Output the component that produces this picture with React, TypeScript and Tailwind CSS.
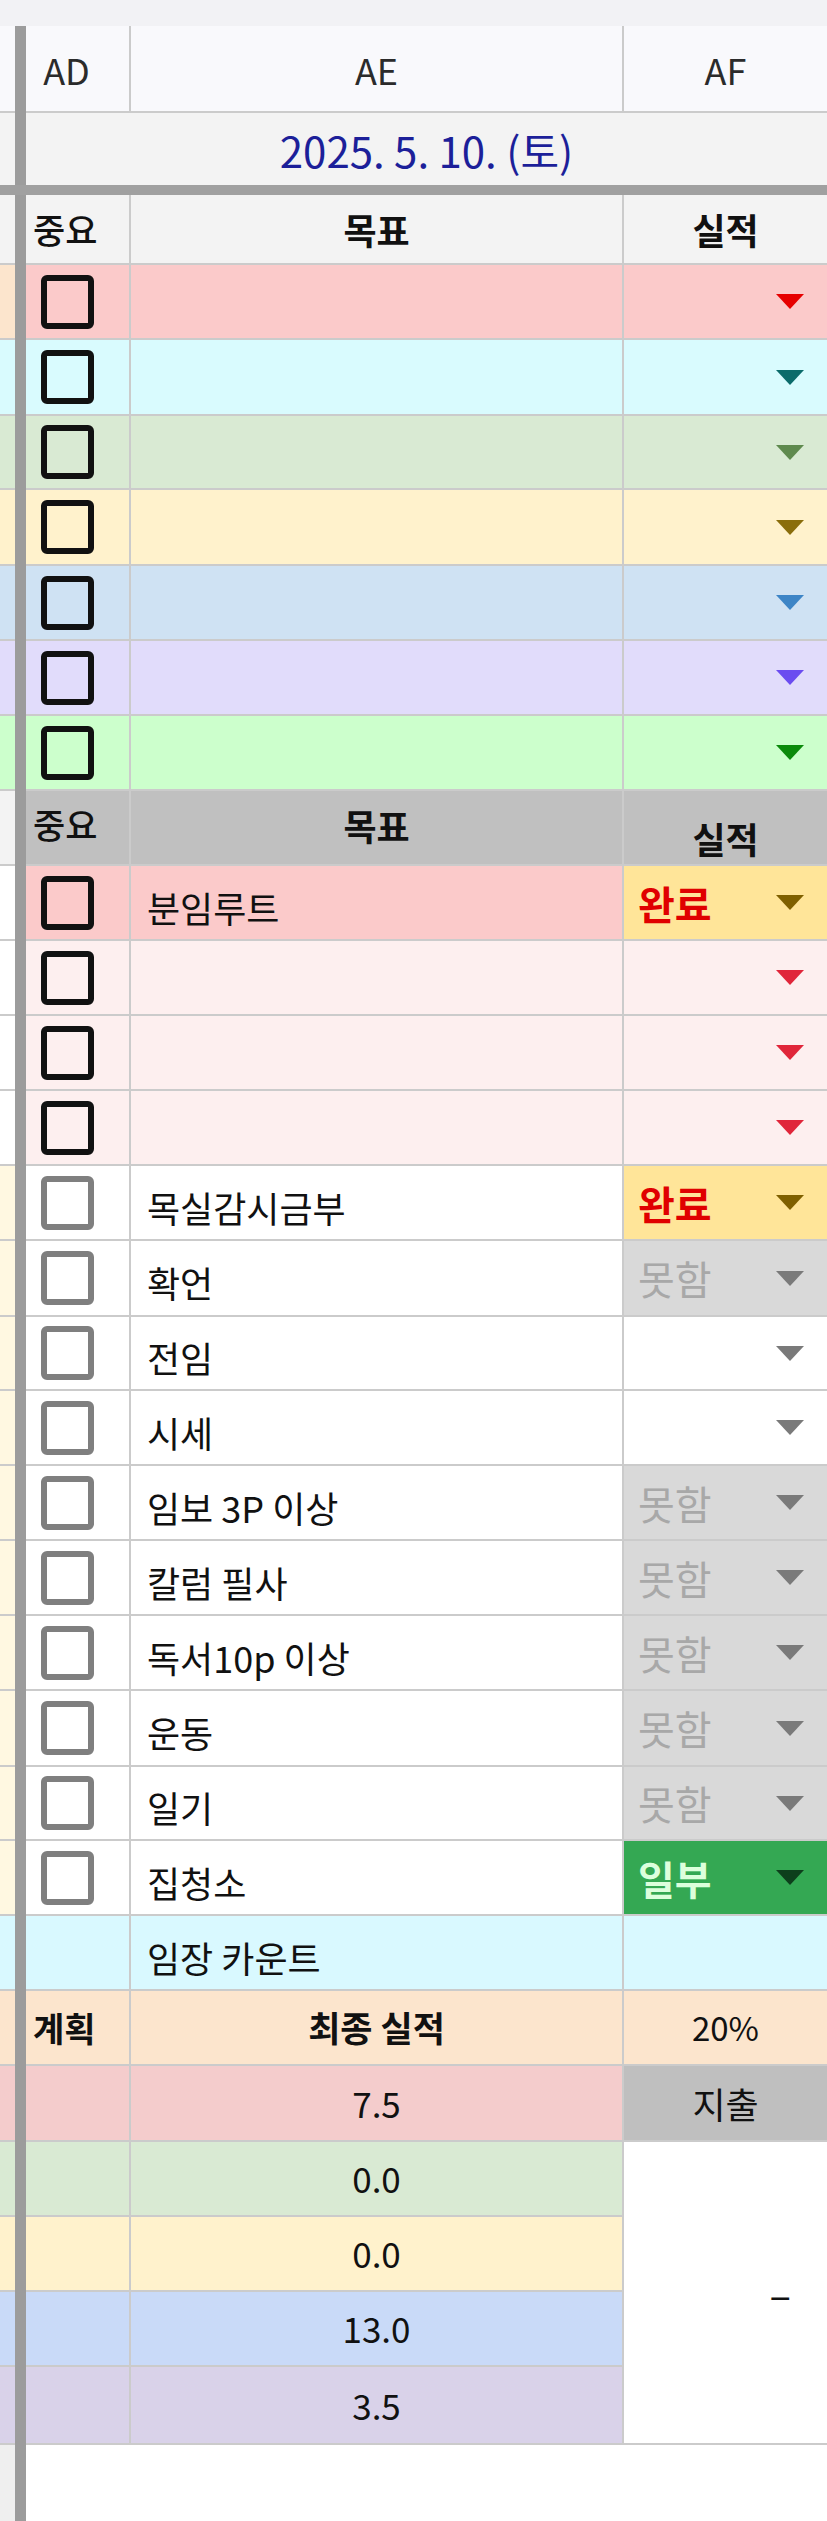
import React from 'react';

const B = 'border-b-2 border-[#cbcbcb]';

type Tone = { h: string; bg: string; strip: string; tri: string };

const colorRows: Tone[] = [
  { h: 'h-[75px]', bg: 'bg-[#fbcaca]', strip: 'bg-[#fce5cd]', tri: '#e60000' },
  { h: 'h-[76px]', bg: 'bg-[#d9fbfe]', strip: 'bg-[#d9fbfe]', tri: '#0b6b6b' },
  { h: 'h-[74px]', bg: 'bg-[#d9ead3]', strip: 'bg-[#d9ead3]', tri: '#5f8a4e' },
  { h: 'h-[76px]', bg: 'bg-[#fff2cc]', strip: 'bg-[#fff2cc]', tri: '#8a6d0b' },
  { h: 'h-[75px]', bg: 'bg-[#cfe2f3]', strip: 'bg-[#cfe2f3]', tri: '#3d85c6' },
  { h: 'h-[75px]', bg: 'bg-[#e1dcfb]', strip: 'bg-[#e1dcfb]', tri: '#6b4cf0' },
  { h: 'h-[75px]', bg: 'bg-[#ccffcc]', strip: 'bg-[#ccffcc]', tri: '#0b8a0b' },
];

type Goal = {
  h: string;
  text: string;
  status?: 'done' | 'miss' | 'part' | 'none';
};

const goals: Goal[] = [
  { h: 'h-[75px]', text: '목실감시금부', status: 'done' },
  { h: 'h-[76px]', text: '확언', status: 'miss' },
  { h: 'h-[74px]', text: '전임', status: 'none' },
  { h: 'h-[75px]', text: '시세', status: 'none' },
  { h: 'h-[75px]', text: '임보 3P 이상', status: 'miss' },
  { h: 'h-[75px]', text: '칼럼 필사', status: 'miss' },
  { h: 'h-[75px]', text: '독서10p 이상', status: 'miss' },
  { h: 'h-[76px]', text: '운동', status: 'miss' },
  { h: 'h-[74px]', text: '일기', status: 'miss' },
  { h: 'h-[75px]', text: '집청소', status: 'part' },
];

const totals = [
  { h: 'h-[75px]', bg: 'bg-[#d9ead3]', value: '0.0' },
  { h: 'h-[75px]', bg: 'bg-[#fff2cc]', value: '0.0' },
  { h: 'h-[75px]', bg: 'bg-[#c9daf8]', value: '13.0' },
  { h: 'h-[78px]', bg: 'bg-[#d9d2e9]', value: '3.5' },
];

function Row({ h, strip, children, border = true }: { h: string; strip: string; children: React.ReactNode; border?: boolean }) {
  return (
    <div className={`flex shrink-0 ${h}`}>
      <div className={`w-[15px] shrink-0 ${strip} ${border ? B : ''}`} />
      <div className="w-[11px] shrink-0 bg-[#9c9c9c]" />
      {children}
    </div>
  );
}

function Box({ dim }: { dim?: boolean }) {
  return (
    <div
      className={`w-[53px] h-[54px] rounded-[6px] border-[6px] ${dim ? 'border-[#7f7f7f]' : 'border-[#111111]'}`}
    />
  );
}

function Tri({ color }: { color: string }) {
  return (
    <svg width="28" height="15" viewBox="0 0 28 15" className="ml-auto mr-[23px] shrink-0">
      <polygon points="0,0 28,0 14,15" fill={color} />
    </svg>
  );
}

function AD({ bg, children }: { bg: string; children?: React.ReactNode }) {
  return (
    <div className={`w-[105px] shrink-0 flex items-center pl-[15px] border-r-2 ${B} ${bg}`}>{children}</div>
  );
}

function AE({ bg, children, center }: { bg: string; children?: React.ReactNode; center?: boolean }) {
  return (
    <div
      className={`w-[493px] shrink-0 flex items-center border-r-2 ${B} ${bg} ${
        center ? 'justify-center' : 'pl-[16px]'
      } text-[36px] text-[#111111]`}
    >
      {children}
    </div>
  );
}

function Status({ status, tri, bg = 'bg-white' }: { status: Goal['status']; tri?: string; bg?: string }) {
  if (status === 'done')
    return (
      <div className={`flex-1 flex items-center pl-[14px] ${B} bg-[#ffe599]`}>
        <span className="text-[40px] font-bold text-[#e00000] leading-none">완료</span>
        <Tri color="#7f6000" />
      </div>
    );
  if (status === 'miss')
    return (
      <div className={`flex-1 flex items-center pl-[14px] ${B} bg-[#d9d9d9]`}>
        <span className="text-[40px] text-[#a8a8a8] leading-none">못함</span>
        <Tri color="#7a7a7a" />
      </div>
    );
  if (status === 'part')
    return (
      <div className={`flex-1 flex items-center pl-[14px] ${B} bg-[#34a853]`}>
        <span className="text-[40px] font-bold text-[#dcffdc] leading-none">일부</span>
        <Tri color="#0d3f1c" />
      </div>
    );
  return (
    <div className={`flex-1 flex items-center ${B} ${bg}`}>
      <Tri color={tri ?? '#7a7a7a'} />
    </div>
  );
}

export default function App() {
  return (
    <div className="w-[827px] h-[2521px] overflow-hidden bg-white flex flex-col font-['Noto_Sans_CJK_KR',sans-serif] text-[#111111]">
      <div className="h-[26px] shrink-0 bg-[#f2f2f5]" />

      {/* column letters */}
      <Row h="h-[87px]" strip="bg-[#f9f9fc]">
        <div className={`w-[105px] shrink-0 flex items-center justify-center pr-[22px] border-r-2 ${B} bg-[#f9f9fc] text-[36px] text-[#2b2b2b]`}>
          AD
        </div>
        <div className={`w-[493px] shrink-0 flex items-center justify-center border-r-2 ${B} bg-[#f9f9fc] text-[36px] text-[#2b2b2b]`}>
          AE
        </div>
        <div className={`flex-1 flex items-center justify-center ${B} bg-[#f9f9fc] text-[36px] text-[#2b2b2b]`}>AF</div>
      </Row>

      {/* date */}
      <Row h="h-[72px]" strip="bg-[#f3f3f3]" border={false}>
        <div className="flex-1 flex items-center justify-center bg-[#f3f3f3] text-[42px] text-[#1c1f99]">
          2025. 5. 10. (토)
        </div>
      </Row>
      <div className="h-[10px] shrink-0 bg-[#a0a0a0]" />

      {/* header */}
      <Row h="h-[70px]" strip="bg-[#f3f3f3]">
        <AD bg="bg-[#f3f3f3]">
          <span className="text-[35px] font-medium -ml-[8px]">중요</span>
        </AD>
        <AE bg="bg-[#f3f3f3]" center>
          <span className="font-bold">목표</span>
        </AE>
        <div className={`flex-1 flex items-center justify-center ${B} bg-[#f3f3f3] text-[36px] font-bold`}>실적</div>
      </Row>

      {colorRows.map((r, i) => (
        <Row key={i} h={r.h} strip={r.strip}>
          <AD bg={r.bg}>
            <Box />
          </AD>
          <AE bg={r.bg} />
          <div className={`flex-1 flex items-center ${B} ${r.bg}`}>
            <Tri color={r.tri} />
          </div>
        </Row>
      ))}

      {/* second header */}
      <Row h="h-[75px]" strip="bg-[#f3f3f3]">
        <AD bg="bg-[#c0c0c0]">
          <span className="text-[35px] font-medium -ml-[8px] -mt-[6px]">중요</span>
        </AD>
        <AE bg="bg-[#c0c0c0]" center>
          <span className="font-bold -mt-[6px]">목표</span>
        </AE>
        <div className={`flex-1 flex items-center justify-center pt-[20px] ${B} bg-[#c0c0c0] text-[36px] font-bold`}>
          실적
        </div>
      </Row>

      <Row h="h-[75px]" strip="bg-white">
        <AD bg="bg-[#fbcaca]">
          <Box />
        </AD>
        <AE bg="bg-[#fbcaca]">
          <span className="pt-[8px]">분임루트</span>
        </AE>
        <Status status="done" />
      </Row>
      {[0, 1, 2].map((i) => (
        <Row key={i} h="h-[75px]" strip="bg-white">
          <AD bg="bg-[#fdefef]">
            <Box />
          </AD>
          <AE bg="bg-[#fdefef]" />
          <Status status="none" tri="#e0263a" bg="bg-[#fdefef]" />
        </Row>
      ))}

      {goals.map((g) => (
        <Row key={g.text} h={g.h} strip="bg-[#fff8e1]">
          <AD bg="bg-white">
            <Box dim />
          </AD>
          <AE bg="bg-white">
            <span className="pt-[8px]">{g.text}</span>
          </AE>
          <Status status={g.status} />
        </Row>
      ))}

      <Row h="h-[75px]" strip="bg-[#d9f9ff]">
        <AD bg="bg-[#d9f9ff]" />
        <AE bg="bg-[#d9f9ff]">
          <span className="pt-[8px]">임장 카운트</span>
        </AE>
        <div className={`flex-1 ${B} bg-[#d9f9ff]`} />
      </Row>

      {/* summary */}
      <Row h="h-[75px]" strip="bg-[#fce5cd]">
        <AD bg="bg-[#fce5cd]">
          <span className="text-[34px] font-bold -ml-[8px]">계획</span>
        </AD>
        <AE bg="bg-[#fce5cd]" center>
          <span className="text-[35px] font-bold">최종 실적</span>
        </AE>
        <div className={`flex-1 flex items-center justify-center ${B} bg-[#fce5cd] text-[33px]`}>20%</div>
      </Row>

      <div className="flex shrink-0">
        <div className="flex flex-col">
          <Row h="h-[76px]" strip="bg-[#f4cccc]">
            <AD bg="bg-[#f4cccc]" />
            <AE bg="bg-[#f4cccc]" center>
              <span className="text-[35px]">7.5</span>
            </AE>
          </Row>
          {totals.map((t, i) => (
            <Row key={i} h={t.h} strip={t.bg}>
              <AD bg={t.bg} />
              <AE bg={t.bg} center>
                <span className="text-[35px]">{t.value}</span>
              </AE>
            </Row>
          ))}
        </div>
        <div className="flex-1 flex flex-col">
          <div className={`h-[76px] flex items-center justify-center ${B} bg-[#bfbfbf] text-[36px]`}>지출</div>
          <div className={`flex-1 flex items-center justify-end pr-[36px] ${B} bg-white text-[40px]`}>–</div>
        </div>
      </div>

      <Row h="flex-1" strip="bg-[#efefef]" border={false}>
        <div className="flex-1 bg-white" />
      </Row>
    </div>
  );
}
